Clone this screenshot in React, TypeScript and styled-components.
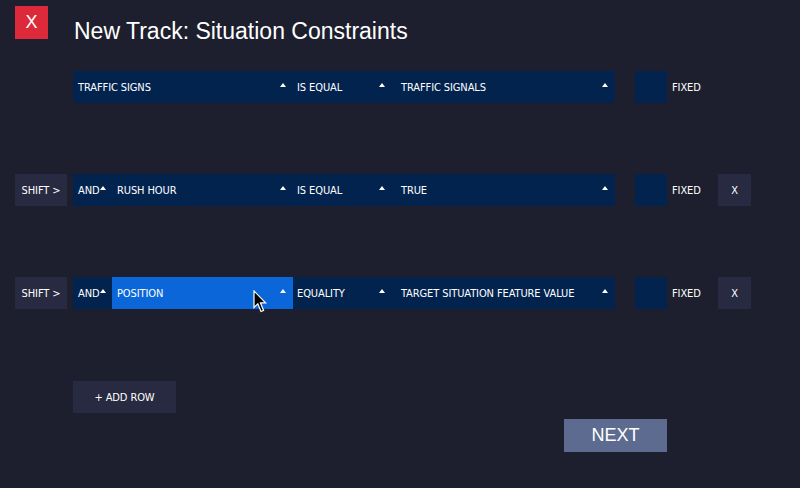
import React from "react";
import styled, { createGlobalStyle } from "styled-components";

const Global = createGlobalStyle`
  html, body { margin: 0; padding: 0; background: #1d1f2e; }
  body { width: 800px; height: 488px; overflow: hidden; }
`;

const Page = styled.div`
  position: relative;
  width: 800px;
  height: 488px;
  background: #1d1f2e;
  box-sizing: border-box;
  padding: 6px 0 0 15px;
  font-family: "DejaVu Sans Condensed", "DejaVu Sans", sans-serif;
`;

const Header = styled.div`
  display: flex;
  align-items: flex-start;
  gap: 26px;
  height: 33px;
`;

const CloseButton = styled.div`
  width: 33px;
  height: 33px;
  background: #dc2a3b;
  color: #fff;
  display: flex;
  align-items: center;
  justify-content: center;
  font-family: "Liberation Sans", Arial, sans-serif;
  font-size: 18px;
`;

const Title = styled.h1`
  margin: 0;
  padding-top: 14px;
  font-family: "Liberation Sans", Arial, sans-serif;
  font-weight: 400;
  font-size: 23px;
  line-height: 23px;
  color: #fff;
  white-space: nowrap;
`;

const Rows = styled.div`
  display: flex;
  flex-direction: column;
  gap: 71px;
  margin-top: 32px;
`;

const Row = styled.div`
  display: flex;
  align-items: stretch;
  height: 32px;
`;

const Label = styled.span`
  color: #ffffff;
  font-size: 11px;
  font-weight: 400;
  letter-spacing: -0.1px;
  white-space: nowrap;
`;

const SideSlot = styled.div`
  width: 52px;
  margin-right: 6px;
  display: flex;
`;

const DarkButton = styled.div<{ $w: number }>`
  width: ${(p) => p.$w}px;
  background: #272a40;
  display: flex;
  align-items: center;
  justify-content: center;
`;

const Selects = styled.div`
  display: flex;
  width: 542px;
  background: #03234f;
`;

const Select = styled.div<{ $w: number; $pl?: number; $active?: boolean }>`
  position: relative;
  width: ${(p) => p.$w}px;
  box-sizing: border-box;
  padding: 0 7px 0 ${(p) => p.$pl ?? 5}px;
  display: flex;
  align-items: center;
  justify-content: space-between;
  background: ${(p) => (p.$active ? "#0a66d9" : "transparent")};
`;

const Caret = styled.span`
  flex-shrink: 0;
  width: 0;
  height: 0;
  border-left: 3.5px solid transparent;
  border-right: 3.5px solid transparent;
  border-bottom: 4px solid #ffffff;
  margin-bottom: 4px;
`;

const Check = styled.div`
  width: 32px;
  margin-left: 20px;
  background: #03234f;
`;

const FixedLabel = styled.div`
  width: 46px;
  padding-left: 5px;
  display: flex;
  align-items: center;
`;

const Footer = styled.div`
  display: flex;
  flex-direction: column;
  margin-top: 72px;
  padding-left: 58px;
`;

const AddRow = styled(DarkButton)`
  height: 32px;
`;

const NextButton = styled.div`
  align-self: flex-start;
  margin: 6px 0 0 491px;
  width: 103px;
  height: 33px;
  background: #5d6b90;
  color: #fff;
  display: flex;
  align-items: center;
  justify-content: center;
  font-family: "Liberation Sans", Arial, sans-serif;
  font-size: 18px;
`;

const Cursor = styled.svg`
  position: absolute;
  left: 141px;
  top: 13px;
`;

type RowData = {
  first: boolean;
  left: string;
  op: string;
  value: string;
  active?: boolean;
};

const rows: RowData[] = [
  { first: true, left: "TRAFFIC SIGNS", op: "IS EQUAL", value: "TRAFFIC SIGNALS" },
  { first: false, left: "RUSH HOUR", op: "IS EQUAL", value: "TRUE" },
  { first: false, left: "POSITION", op: "EQUALITY", value: "TARGET SITUATION FEATURE VALUE", active: true },
];

export default function App() {
  return (
    <>
      <Global />
      <Page>
        <Header>
          <CloseButton>X</CloseButton>
          <Title>New Track: Situation Constraints</Title>
        </Header>
        <Rows>
          {rows.map((r, i) => (
            <Row key={i}>
              <SideSlot>
                {!r.first && (
                  <DarkButton $w={52}>
                    <Label>SHIFT &gt;</Label>
                  </DarkButton>
                )}
              </SideSlot>
              <Selects>
                {!r.first && (
                  <Select $w={39}>
                    <Label>AND</Label>
                    <Caret />
                  </Select>
                )}
                <Select $w={r.first ? 220 : 181} $active={r.active}>
                  <Label>{r.left}</Label>
                  <Caret />
                  {r.active && (
                    <Cursor width="15" height="23" viewBox="0 0 15 23">
                      <path
                        d="M1 1 L1 17.5 L4.8 13.8 L8 21.5 L10.6 20.4 L7.4 12.8 L12.6 12.8 Z"
                        fill="#000"
                        stroke="#fff"
                        strokeWidth="1.2"
                        strokeLinejoin="miter"
                      />
                    </Cursor>
                  )}
                </Select>
                <Select $w={99} $pl={4}>
                  <Label>{r.op}</Label>
                  <Caret />
                </Select>
                <Select $w={223} $pl={9}>
                  <Label>{r.value}</Label>
                  <Caret />
                </Select>
              </Selects>
              <Check />
              <FixedLabel>
                <Label>FIXED</Label>
              </FixedLabel>
              {!r.first && (
                <DarkButton $w={33}>
                  <Label>X</Label>
                </DarkButton>
              )}
            </Row>
          ))}
        </Rows>
        <Footer>
          <AddRow $w={103}>
            <Label>+ ADD ROW</Label>
          </AddRow>
          <NextButton>NEXT</NextButton>
        </Footer>
      </Page>
    </>
  );
}
